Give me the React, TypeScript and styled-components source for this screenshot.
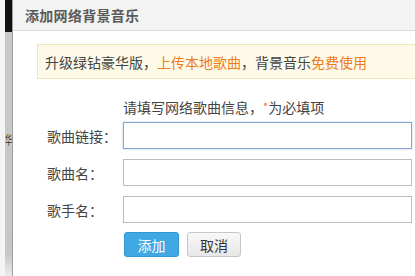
import React from 'react';
import styled, { createGlobalStyle } from 'styled-components';

const GlobalStyle = createGlobalStyle`
  html, body {
    margin: 0;
    padding: 0;
    background: #fff;
    overflow: hidden;
  }
  body {
    font-family: 'Noto Sans CJK SC', 'Noto Sans', sans-serif;
  }
`;

const fields = [
  { label: '歌曲链接：', focused: true },
  { label: '歌曲名：', focused: false },
  { label: '歌手名：', focused: false },
];

const App: React.FC = () => {
  return (
    <Page>
      <GlobalStyle />
      <SideStrip>
        <StripBar>
          <StripTop />
          <StripGlyph>华</StripGlyph>
        </StripBar>
      </SideStrip>
      <Dialog>
        <Header>
          <Title>添加网络背景音乐</Title>
        </Header>
        <Body>
          <Notice>
            升级绿钻豪华版，<Highlight>上传本地歌曲</Highlight>，背景音乐
            <Highlight>免费使用</Highlight>
          </Notice>
          <Form>
            <Spacer />
            <Hint>
              请填写网络歌曲信息，<Star>*</Star>为必填项
            </Hint>
            {fields.map(f => (
              <React.Fragment key={f.label}>
                <Label>{f.label}</Label>
                <Input $focused={f.focused} />
              </React.Fragment>
            ))}
            <Spacer />
            <Buttons>
              <PrimaryButton>添加</PrimaryButton>
              <SecondaryButton>取消</SecondaryButton>
            </Buttons>
          </Form>
        </Body>
      </Dialog>
    </Page>
  );
};

export default App;

const Page = styled.div`
  display: flex;
  width: 415px;
  height: 276px;
  overflow: hidden;
`;

const SideStrip = styled.div`
  width: 13px;
  flex-shrink: 0;
  padding-left: 5px;
  box-sizing: border-box;
  background: #f4f4f4;
`;

const StripBar = styled.div`
  position: relative;
  height: 100%;
  background: linear-gradient(to bottom, #c9c9c9 0%, #c6c6c6 92%, #ececec 100%);
  border-right: 1px solid #9e9e9e;
`;

const StripTop = styled.div`
  height: 32px;
  background: #111;
`;

const StripGlyph = styled.span`
  position: absolute;
  top: 133px;
  left: 0;
  width: 7px;
  font-size: 12px;
  line-height: 14px;
  color: #333;
  transform: scaleX(0.6);
  transform-origin: left center;
`;

const Dialog = styled.div`
  flex: 1;
  display: flex;
  flex-direction: column;
  min-width: 0;
`;

const Header = styled.div`
  height: 30px;
  display: flex;
  align-items: center;
  padding-left: 12px;
  background: #f3f3f3;
  border-bottom: 1px solid #dedede;
`;

const Title = styled.div`
  font-size: 14px;
  font-weight: 700;
  color: #5a5a5a;
  letter-spacing: 0.3px;
`;

const Body = styled.div`
  padding: 13px 0 0 24px;
`;

const Notice = styled.div`
  height: 35px;
  box-sizing: border-box;
  margin-right: -6px;
  display: flex;
  align-items: center;
  padding-left: 7px;
  background: #fefae8;
  border: 1px solid #f2e4bb;
  font-size: 14px;
  color: #444;
  white-space: nowrap;
`;

const Highlight = styled.span`
  color: #ee7b1c;
`;

const Form = styled.div`
  display: grid;
  grid-template-columns: 76px 289px;
  row-gap: 10px;
  align-items: center;
  padding-left: 10px;
  margin-top: 17px;
`;

const Spacer = styled.div``;

const Hint = styled.div`
  font-size: 14px;
  line-height: 20px;
  color: #444;
  margin-bottom: -5px;
  white-space: nowrap;
`;

const Star = styled.span`
  color: #f26a3a;
  font-size: 11px;
  vertical-align: 2px;
`;

const Label = styled.div`
  font-size: 14px;
  color: #444;
  white-space: nowrap;
`;

const Input = styled.input<{ $focused: boolean }>`
  height: 27px;
  box-sizing: border-box;
  border: 1px solid ${p => (p.$focused ? '#86a8d8' : '#bcbcbc')};
  box-shadow: ${p => (p.$focused ? '0 0 2px rgba(110, 150, 210, 0.5)' : 'none')};
  background: #fff;
  outline: none;
`;

const Buttons = styled.div`
  display: flex;
  gap: 8px;
  padding-left: 1px;
  margin-top: -1px;
`;

const BaseButton = styled.button`
  height: 25px;
  box-sizing: border-box;
  padding: 0;
  border-radius: 3px;
  font-family: 'Noto Sans CJK SC', 'Noto Sans', sans-serif;
  font-size: 14px;
  line-height: 1;
`;

const PrimaryButton = styled(BaseButton)`
  width: 55px;
  background: #40a8e2;
  border: 1px solid #3497d2;
  color: #fff;
`;

const SecondaryButton = styled(BaseButton)`
  width: 54px;
  background: linear-gradient(to bottom, #f8f8f8, #e7e7e7);
  border: 1px solid #c6c6c6;
  color: #333;
`;
